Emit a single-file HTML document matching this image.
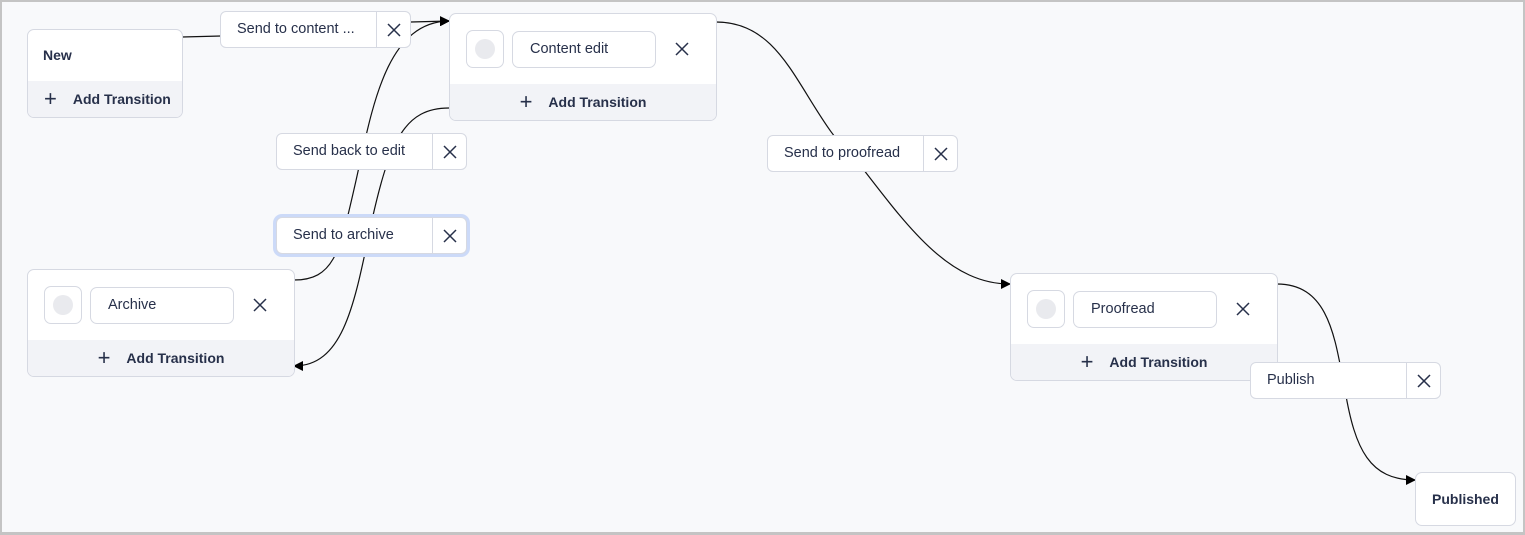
<!DOCTYPE html>
<html><head><meta charset="utf-8"><style>
*{box-sizing:border-box;margin:0;padding:0}
body{width:1525px;height:535px;overflow:hidden;background:#f8f9fb;font-family:"Liberation Sans",sans-serif;color:#27304a;position:relative}
.frame{position:absolute;left:0;top:0;width:1525px;height:535px;border:2px solid #c4c4c4;border-bottom-width:3px}
svg.e{position:absolute;left:0;top:0}
.card{position:absolute;background:#fff;border:1px solid #d6d9e2;border-radius:7px;overflow:hidden}
.foot{position:absolute;left:0;right:0;bottom:0;height:36px;background:#f2f3f7;font-size:14px;font-weight:bold;display:flex;align-items:center}
.plus{font-size:22px;font-weight:normal;margin-right:16px;line-height:1}
.circ{position:absolute;width:38px;height:38px;border:1px solid #d6d9e2;border-radius:7px}
.circ:after{content:"";position:absolute;left:8px;top:8px;width:20px;height:20px;border-radius:50%;background:#e9eaee}
.inp{position:absolute;height:37px;border:1px solid #d6d9e2;border-radius:7px;font-size:14.5px;padding-left:17px;line-height:35px}
.x{position:absolute;width:14px;height:14px}
.lab{position:absolute;width:191px;height:37px;background:#fff;border:1px solid #d6d9e2;border-radius:6px;font-size:14.5px;line-height:35px;padding-left:16px}
.lab .d{position:absolute;left:155px;top:0;bottom:0;border-left:1px solid #d6d9e2;width:35px}
.lab .d svg{position:absolute;left:10px;top:11px}
</style></head><body>
<svg class="e" width="1525" height="535">
<defs><marker id="a" markerWidth="10" markerHeight="10" refX="9" refY="5" orient="auto" markerUnits="userSpaceOnUse"><path d="M0,0 L10,5 L0,10z" fill="#000"/></marker></defs>
<g fill="none" stroke="#111" stroke-width="1.2">
<path d="M182,37 L221,36"/>
<path d="M411,22 L449,21" marker-end="url(#a)"/>
<path d="M294,280 C335,280 340,250 355,185 C372,110 385,22 449,21" marker-end="url(#a)"/>
<path d="M449,108 C405,108 390,140 372,220 C355,300 345,366 294,366" marker-end="url(#a)"/>
<path d="M716,22 C790,22 800,110 860,165 C910,230 950,284 1010,284" marker-end="url(#a)"/>
<path d="M1277,284 C1330,284 1335,340 1345,390 C1355,450 1370,480 1415,480" marker-end="url(#a)"/>
</g></svg>

<div class="card" style="left:27px;top:29px;width:156px;height:89px">
<div style="position:absolute;left:15px;top:17px;font-size:14px;font-weight:bold">New</div>
<div class="foot" style="padding-left:16px"><span class="plus">+</span>Add Transition</div></div>

<div class="card" style="left:449px;top:13px;width:268px;height:108px">
<div class="circ" style="left:16px;top:16px"></div>
<div class="inp" style="left:62px;top:17px;width:144px">Content edit</div>
<svg class="x" style="left:225px;top:28px" viewBox="0 0 14 14"><path d="M1,1L13,13M13,1L1,13" stroke="#27304a" stroke-width="1.5"/></svg>
<div class="foot" style="justify-content:center"><span class="plus">+</span>Add Transition</div></div>

<div class="card" style="left:27px;top:269px;width:268px;height:108px">
<div class="circ" style="left:16px;top:16px"></div>
<div class="inp" style="left:62px;top:17px;width:144px">Archive</div>
<svg class="x" style="left:225px;top:28px" viewBox="0 0 14 14"><path d="M1,1L13,13M13,1L1,13" stroke="#27304a" stroke-width="1.5"/></svg>
<div class="foot" style="justify-content:center"><span class="plus">+</span>Add Transition</div></div>

<div class="card" style="left:1010px;top:273px;width:268px;height:108px">
<div class="circ" style="left:16px;top:16px"></div>
<div class="inp" style="left:62px;top:17px;width:144px">Proofread</div>
<svg class="x" style="left:225px;top:28px" viewBox="0 0 14 14"><path d="M1,1L13,13M13,1L1,13" stroke="#27304a" stroke-width="1.5"/></svg>
<div class="foot" style="justify-content:center"><span class="plus">+</span>Add Transition</div></div>

<div class="card" style="left:1415px;top:472px;width:101px;height:54px;font-size:14px;font-weight:bold;line-height:52px;padding-left:16px">Published</div>

<div class="lab" style="left:220px;top:11px">Send to content ...<span class="d"><svg width="14" height="14" viewBox="0 0 14 14"><path d="M1,1L13,13M13,1L1,13" stroke="#27304a" stroke-width="1.5"/></svg></span></div>
<div class="lab" style="left:276px;top:133px">Send back to edit<span class="d"><svg width="14" height="14" viewBox="0 0 14 14"><path d="M1,1L13,13M13,1L1,13" stroke="#27304a" stroke-width="1.5"/></svg></span></div>
<div class="lab" style="left:276px;top:217px;box-shadow:0 0 0 3px #ccdaf8">Send to archive<span class="d"><svg width="14" height="14" viewBox="0 0 14 14"><path d="M1,1L13,13M13,1L1,13" stroke="#27304a" stroke-width="1.5"/></svg></span></div>
<div class="lab" style="left:767px;top:135px">Send to proofread<span class="d"><svg width="14" height="14" viewBox="0 0 14 14"><path d="M1,1L13,13M13,1L1,13" stroke="#27304a" stroke-width="1.5"/></svg></span></div>
<div class="lab" style="left:1250px;top:362px">Publish<span class="d"><svg width="14" height="14" viewBox="0 0 14 14"><path d="M1,1L13,13M13,1L1,13" stroke="#27304a" stroke-width="1.5"/></svg></span></div>
<div class="frame"></div>
</body></html>
